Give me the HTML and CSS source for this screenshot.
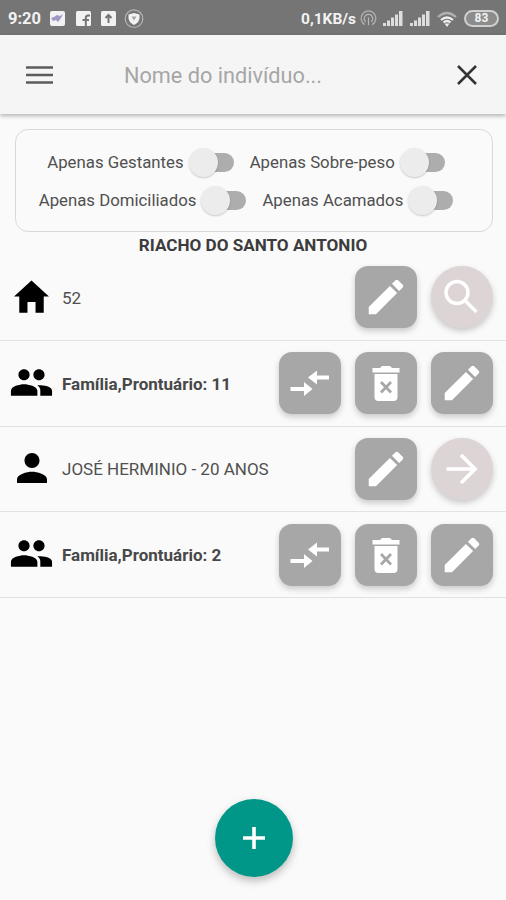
FILE: index.html
```html
<!DOCTYPE html>
<html lang="pt-BR">
  <head>
    <meta charset="UTF-8" />
    <meta name="viewport" content="width=device-width, initial-scale=1.0" />
    <title>Indivíduos</title>
    <link rel="stylesheet" href="styles.css">
  </head>
  <body>
    <!-- shared icons -->
    <svg class="sprite">
      <symbol id="home" viewBox="0 0 512 512"><path d="M208 448V320h96v128h97.6V256H464L256 64 48 256h62.4v192z"/></symbol>
      <symbol id="people" viewBox="0 0 512 512"><path d="M337.454 232c33.599 0 61.092-27.002 61.092-60 0-32.997-27.493-60-61.092-60s-61.09 27.003-61.09 60c0 32.998 27.491 60 61.09 60zm-162.908 0c33.599 0 61.09-27.002 61.09-60 0-32.997-27.491-60-61.09-60s-61.092 27.003-61.092 60c0 32.998 27.493 60 61.092 60zm0 44C126.688 276 32 298.998 32 346v54h288v-54c0-47.002-97.599-70-145.454-70zm162.908 11.003c-6.105 0-10.325 0-17.454.997 23.426 17.002 32 28 32 58v54h128v-54c0-47.002-94.688-58.997-142.546-58.997z"/></symbol>
      <symbol id="person" viewBox="0 0 512 512"><path d="M256 256c52.805 0 96-43.201 96-96s-43.195-96-96-96-96 43.201-96 96 43.195 96 96 96zm0 48c-63.598 0-192 32.402-192 96v48h384v-48c0-63.598-128.402-96-192-96z"/></symbol>
      <symbol id="create" viewBox="0 0 512 512"><path d="M64 368v80h80l235.727-235.729-79.999-79.998L64 368zm377.602-217.602c8.531-8.531 8.531-21.334 0-29.865l-50.135-50.135c-8.531-8.531-21.334-8.531-29.865 0l-39.468 39.469 79.999 79.998 39.469-39.467z"/></symbol>
      <symbol id="swap" viewBox="0 0 62 62"><path d="M29 25.500l9-7v5h12v4H38v5zM33.500 37l-8.500 7v-5H11.500v-4H25v-5z"/></symbol>
      <symbol id="trash" viewBox="0 0 62 62"><path d="M17.500 16h7.500l2-2h8l2 2h7.500v4.500h-27z"/><path fill-rule="evenodd" d="M19.500 22h23v23a4 4 0 0 1-4 4h-15a4 4 0 0 1-4-4zM27 29l-2 2 4 4.300-4 4.300 2 2 4-4.300 4 4.300 2-2-4-4.300 4-4.300-2-2-4 4.300z"/></symbol>
      <symbol id="search" viewBox="0 0 62 62"><g fill="none" stroke="currentColor" stroke-width="3.400"><circle cx="26" cy="26.500" r="11"/><path d="M34 34.500l11.500 11.500"/></g></symbol>
      <symbol id="arrow" viewBox="0 0 62 62"><path d="M15.500 31h28M30 17l14 14-14 14" fill="none" stroke="currentColor" stroke-width="3.700"/></symbol>
      <symbol id="signal" viewBox="0 0 20 16"><path d="M0 13h3v3H0zM4 10.500h3V16H4zM8 7.500h3V16H8zM12 4.500h3V16h-3zM16 1h3.500v15H16z"/></symbol>
    </svg>

    <div class="statusbar">
      <span class="clock">9:20</span>
      <svg class="notices" viewBox="0 0 96 20">
        <rect x="0" y="2" width="15" height="15" rx="2"/>
        <path class="bird" d="M1 9l3-1 3-2 3 1 3-2-2 4-3 4-2-2-3 1z"/>
        <rect x="26" y="2" width="15" height="15" rx="1.500"/>
        <path class="cut" d="M40 6.500h-2q-2.200 0-2.200 2.500v8M32.500 11h6.500"/>
        <rect x="51" y="2" width="15" height="15" rx="1.500"/>
        <path class="cut" d="M58.500 14V6M55.500 9l3-3 3 3"/>
        <circle class="ring" cx="84" cy="9.700" r="8.800"/>
        <path d="M78.500 5.500l5.500-1.500 5.500 1.500v4q-1 4.500-5.500 6.500-4.500-2-5.500-6.500z"/>
        <path class="shield" d="M81.500 7.500h5l-2.500 4z"/>
      </svg>
      <span class="speed">0,1KB/s</span>
      <svg class="hotspot" viewBox="0 0 18 18"><path d="M5 15.500a7.800 7.800 0 1 1 8 0M6 12.500a4.500 4.500 0 1 1 6 0"/><path d="M9 8v8"/></svg>
      <svg class="signal"><use href="#signal"/></svg>
      <svg class="signal second"><use href="#signal"/></svg>
      <svg class="wifi" viewBox="0 0 20 16"><path class="outer" d="M1 6q9-8 18 0"/><path d="M4 9q6-5 12 0M6.500 11.500q3.500-3 7 0"/><path class="dot" d="M7.500 12.500h5L10 16z"/></svg>
      <span class="battery">83</span>
    </div>

    <header class="toolbar">
      <svg class="menu" viewBox="0 0 27 18"><path d="M0 1.500h27M0 9h27M0 16.500h27"/></svg>
      <input class="search-input" type="text" placeholder="Nome do indivíduo..." />
      <svg class="close" viewBox="0 0 20 20"><path d="M1 1l18 18M19 1L1 19"/></svg>
    </header>

    <section class="filters">
      <div class="filter-row">
        <label class="filter">Apenas Gestantes <span class="toggle"></span></label>
        <label class="filter">Apenas Sobre-peso <span class="toggle"></span></label>
      </div>
      <div class="filter-row">
        <label class="filter">Apenas Domiciliados <span class="toggle"></span></label>
        <label class="filter">Apenas Acamados <span class="toggle"></span></label>
      </div>
    </section>

    <h1 class="street">RIACHO DO SANTO ANTONIO</h1>

    <div class="list">
      <div class="item">
        <div class="item-icon"><svg class="icon-home"><use href="#home"/></svg></div>
        <span class="item-text">52</span>
        <button class="btn"><svg class="icon-create"><use href="#create"/></svg></button>
        <button class="btn round"><svg><use href="#search"/></svg></button>
      </div>
      <div class="item">
        <div class="item-icon"><svg class="icon-people"><use href="#people"/></svg></div>
        <span class="item-text family">Família,Prontuário: 11</span>
        <button class="btn"><svg><use href="#swap"/></svg></button>
        <button class="btn"><svg><use href="#trash"/></svg></button>
        <button class="btn"><svg class="icon-create"><use href="#create"/></svg></button>
      </div>
      <div class="item">
        <div class="item-icon"><svg class="icon-person"><use href="#person"/></svg></div>
        <span class="item-text">JOSÉ HERMINIO - 20 ANOS</span>
        <button class="btn"><svg class="icon-create"><use href="#create"/></svg></button>
        <button class="btn round"><svg><use href="#arrow"/></svg></button>
      </div>
      <div class="item">
        <div class="item-icon"><svg class="icon-people"><use href="#people"/></svg></div>
        <span class="item-text family">Família,Prontuário: 2</span>
        <button class="btn"><svg><use href="#swap"/></svg></button>
        <button class="btn"><svg><use href="#trash"/></svg></button>
        <button class="btn"><svg class="icon-create"><use href="#create"/></svg></button>
      </div>
    </div>

    <button class="fab"><svg viewBox="0 0 22 22"><path d="M11 0v22M0 11h22"/></svg></button>
  </body>
</html>
```
FILE: styles.css
```css
* {
  box-sizing: border-box;
}
body {
  margin: 0;
  height: 900px;
  display: flex;
  flex-direction: column;
  overflow: hidden;
  background: #fafafa;
  color: #505050;
  font-family: Roboto, sans-serif;
}
svg {
  display: block;
  fill: currentColor;
}
.sprite {
  display: none;
}

/* status bar */
.statusbar {
  flex: none;
  height: 35px;
  padding: 2px 7px 0 8px;
  display: flex;
  align-items: center;
  background: #757575;
  color: #f2f2f2;
  font-size: 16.5px;
  font-weight: 700;
}
.clock {
  width: 42px;
}
.notices {
  width: 96px;
  height: 20px;
}
.notices .bird {
  fill: #9d98c4;
}
.notices .cut {
  fill: none;
  stroke: #757575;
  stroke-width: 2;
}
.notices .ring {
  fill: none;
  stroke: #b5b5b5;
  stroke-width: 1.2;
}
.notices .shield {
  fill: #a5a5a5;
}
.speed {
  width: 59px;
  margin-left: auto;
  font-size: 15.5px;
  white-space: nowrap;
}
.hotspot {
  width: 17px;
  height: 17px;
  fill: none;
  stroke: #b8b8b8;
  stroke-width: 1.3;
}
.signal {
  width: 20px;
  height: 16px;
  margin-left: 6px;
  margin-bottom: 2px;
  color: #dedede;
}
.signal.second {
  margin-left: 7px;
}
.wifi {
  width: 20px;
  height: 16px;
  margin: 0 7px;
  fill: none;
  stroke: #eee;
  stroke-width: 2.2;
}
.wifi .outer {
  stroke: #b0b0b0;
}
.wifi .dot {
  fill: #eee;
  stroke: none;
}
.battery {
  width: 35px;
  height: 17px;
  margin-bottom: 1px;
  border: 2px solid #d0d0d0;
  border-radius: 9px;
  background: #8c8c8c;
  font-size: 12px;
  line-height: 13px;
  text-align: center;
}

/* toolbar */
.toolbar {
  flex: none;
  height: 79px;
  padding: 0 29px 0 26px;
  display: flex;
  align-items: center;
  background: #f5f5f5;
  box-shadow: 0 2px 4px rgba(0, 0, 0, 0.28);
}
.menu {
  width: 27px;
  height: 18px;
  stroke: #5c5c5c;
  stroke-width: 2.5;
}
.search-input {
  flex: 1;
  min-width: 0;
  margin-left: 71px;
  padding: 2px 0 0;
  border: 0;
  background: none;
  font-family: inherit;
  font-size: 21.7px;
}
.search-input::placeholder {
  color: #a6a6a6;
}
.close {
  width: 20px;
  height: 20px;
  stroke: #333;
  stroke-width: 2.5;
}

/* filters */
.filters {
  flex: none;
  height: 103px;
  margin: 15px 13px 0 15px;
  padding: 13px 0;
  border: 1.5px solid #d9d9d9;
  border-radius: 13px;
}
.filter-row {
  height: 38px;
  display: flex;
  justify-content: center;
}
.filter {
  display: flex;
  align-items: center;
  font-size: 16.8px;
  white-space: nowrap;
}
.toggle {
  position: relative;
  width: 41px;
  height: 19px;
  margin: 0 16px 0 9px;
  border-radius: 10px;
  background: #adadad;
}
.toggle::before {
  content: "";
  position: absolute;
  left: -4px;
  top: -5px;
  width: 29px;
  height: 29px;
  border-radius: 50%;
  background: #ececec;
  box-shadow: 0 1px 2px rgba(0, 0, 0, 0.2);
}
.street {
  flex: none;
  height: 22px;
  margin: 1px 0 0;
  color: #3c3c3c;
  font-size: 17.1px;
  font-weight: 700;
  line-height: 24px;
  text-align: center;
}

/* list */
.item {
  height: 85.75px;
  padding: 0 13px 0 9px;
  display: flex;
  align-items: center;
  gap: 14px;
  border-bottom: 1.5px solid #e2e2e2;
}
.item-icon {
  width: 45px;
  margin-right: -6px;
  padding-bottom: 2px;
  display: flex;
  justify-content: center;
  color: #000;
}
.item-icon svg {
  flex: none;
}
.icon-home {
  width: 43px;
  height: 43px;
}
.icon-people {
  width: 47px;
  height: 47px;
}
.icon-person {
  width: 40px;
  height: 40px;
}
.item-text {
  flex: 1;
  padding-top: 1px;
  font-size: 17px;
  white-space: nowrap;
}
.item-text.family {
  color: #484848;
  font-weight: 700;
}
.btn {
  flex: none;
  width: 62px;
  height: 62px;
  padding: 0;
  display: flex;
  align-items: center;
  justify-content: center;
  border: 0;
  border-radius: 13px;
  background: #a7a7a7;
  color: #fff;
  box-shadow: 0 3px 6px rgba(0, 0, 0, 0.2);
}
.btn svg {
  width: 62px;
  height: 62px;
}
.btn .icon-create {
  width: 46px;
  height: 46px;
  margin: 0 1px 0 0;
}
.btn.round {
  border-radius: 50%;
  background: #ddd5d5;
}

.fab {
  flex: none;
  width: 78px;
  height: 78px;
  margin: auto auto 23px 215px;
  padding: 0;
  display: flex;
  align-items: center;
  justify-content: center;
  border: 0;
  border-radius: 50%;
  background: #009688;
  box-shadow: 0 4px 8px rgba(0, 0, 0, 0.25);
}
.fab svg {
  width: 22px;
  height: 22px;
  stroke: #fff;
  stroke-width: 3.6;
}
```
